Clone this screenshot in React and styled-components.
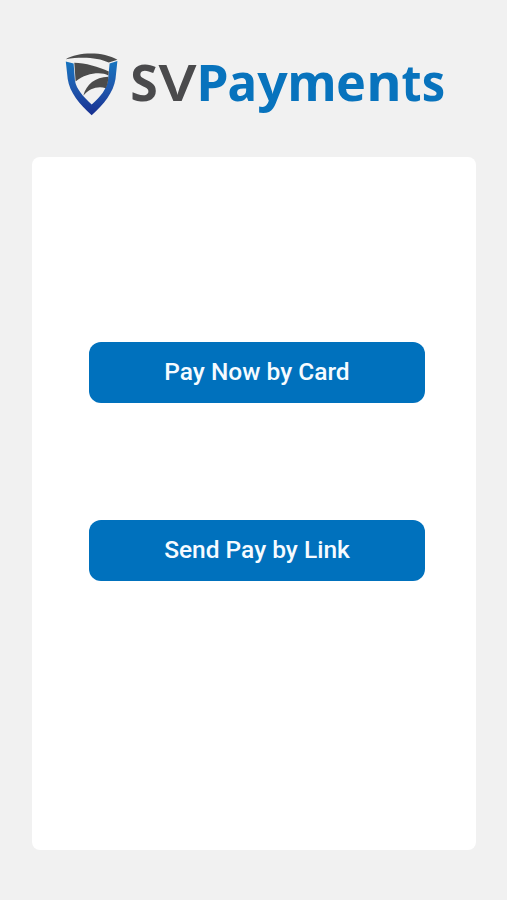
import React from 'react';
import styled, { createGlobalStyle } from 'styled-components';

const GlobalStyle = createGlobalStyle`
  * { box-sizing: border-box; }
  body { margin: 0; background: #f1f1f1; }
`;

const Screen = styled.main`
  display: flex;
  flex-direction: column;
  height: 900px;
  padding: 0 31px 50px 32px;
  background: #f1f1f1;
`;

const Header = styled.header`
  flex: none;
  height: 157px;
  padding: 45px 0 0 23px;
`;

const Logo = styled.svg`
  display: block;
  width: 400px;
  height: 80px;
`;

const Wordmark = styled.text`
  font-family: 'Noto Sans', sans-serif;
  font-size: 50px;
  font-weight: ${({ $weight }) => $weight || 700};
  fill: ${({ $color }) => $color};
`;

const Card = styled.section`
  flex: 1;
  display: flex;
  flex-direction: column;
  gap: 117px;
  padding: 185px 51px 0 57px;
  border-radius: 8px;
  background: #fff;
`;

const ActionButton = styled.button`
  height: 61px;
  padding: 0 0 1px;
  border: 0;
  border-radius: 12px;
  background: #0071bd;
  color: #f6fbff;
  font: 500 24.5px/28px Roboto, sans-serif;
`;

function BrandLogo() {
  return (
    <Logo viewBox="0 0 400 80" role="img" aria-label="SVPayments">
      <defs>
        <linearGradient id="shieldBlue" x1="0" y1="0" x2="0" y2="1">
          <stop offset="0" stopColor="#1674bf" />
          <stop offset="0.5" stopColor="#2058ad" />
          <stop offset="1" stopColor="#172f91" />
        </linearGradient>
      </defs>
      <path d="M10.8 16.6L18.6 18.6L20 36C21.5 44 28 51.5 36.7 59.5C46 51.5 51.5 44 53 35L54.6 18.6L62.4 16L60.5 34C58.5 47 49 59.5 36.7 70.2C24.5 59.5 14.5 47 12.7 34Z" fill="url(#shieldBlue)" />
      <path d="M10.8 14.2C23 7 48 6.2 62.4 14.8L53.7 17.6C43 12.4 27 11.6 10.8 14.2Z" fill="#4b4b4b" />
      <path d="M19.3 17.8C30 17.8 44 22 53.8 26.5L53.4 30.4C46 26.5 31 28 20.6 36.5Z" fill="#4b4b4b" />
      <path d="M28.3 50.8C31.5 39.2 40 32.2 53.3 31.8C53.3 36 52.5 39.8 50.8 43.2C43 40.8 34.5 43.3 28.3 50.8Z" fill="#4b4b4b" />
      <Wordmark $color="#4a4a4c" x="75.2" y="55.5">S</Wordmark>
      <Wordmark $color="#4a4a4c" $weight={600} x="103.5" y="55.5" textLength="38" lengthAdjust="spacingAndGlyphs">V</Wordmark>
      <Wordmark $color="#0873bd" x="141.6" y="55.5" textLength="32" lengthAdjust="spacingAndGlyphs">P</Wordmark>
      <Wordmark $color="#0873bd" x="172.5" y="55.5" textLength="29.5" lengthAdjust="spacingAndGlyphs">a</Wordmark>
      <Wordmark $color="#0873bd" x="202.3" y="55.5" textLength="30.5" lengthAdjust="spacingAndGlyphs">y</Wordmark>
      <Wordmark $color="#0873bd" x="232.4" y="55.5" textLength="49" lengthAdjust="spacingAndGlyphs">m</Wordmark>
      <Wordmark $color="#0873bd" x="281" y="55.5" textLength="30" lengthAdjust="spacingAndGlyphs">e</Wordmark>
      <Wordmark $color="#0873bd" x="311.5" y="55.5" textLength="35" lengthAdjust="spacingAndGlyphs">n</Wordmark>
      <Wordmark $color="#0873bd" x="346.6" y="55.5" textLength="20" lengthAdjust="spacingAndGlyphs">t</Wordmark>
      <Wordmark $color="#0873bd" x="366.7" y="55.5" textLength="23.5" lengthAdjust="spacingAndGlyphs">s</Wordmark>
    </Logo>
  );
}

export default function App() {
  return (
    <>
      <GlobalStyle />
      <Screen>
        <Header><BrandLogo /></Header>
        <Card>
          <ActionButton>Pay Now by Card</ActionButton>
          <ActionButton>Send Pay by Link</ActionButton>
        </Card>
      </Screen>
    </>
  );
}
